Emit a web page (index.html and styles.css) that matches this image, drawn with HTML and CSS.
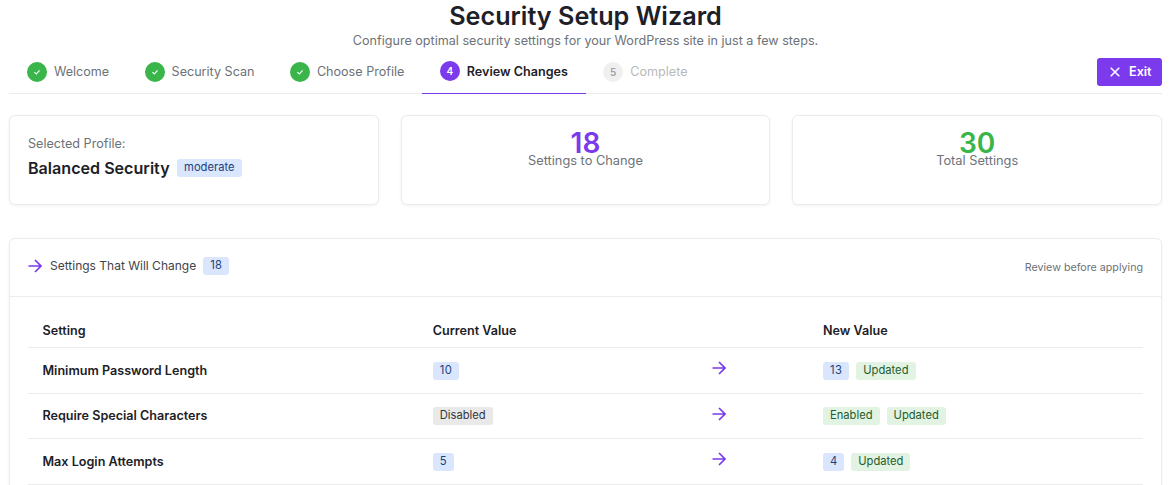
FILE: index.html
```html
<!DOCTYPE html>
<html lang="en">
<head>
<meta charset="utf-8">
<title>Security Setup Wizard</title>
<link rel="stylesheet" href="styles.css">
</head>
<body>
<main class="wizard">
  <header class="intro">
    <h1 class="title">Security Setup Wizard</h1>
    <p class="subtitle">Configure optimal security settings for your WordPress site in just a few steps.</p>
  </header>
  <nav class="stepper">
    <div class="steps">
      <div class="step done"><span class="dot"><svg class="check" viewBox="0 0 12 12"><path d="M3.400 6.200 5.300 8 8.600 4.400"/></svg></span><span>Welcome</span></div>
      <div class="step done"><span class="dot"><svg class="check" viewBox="0 0 12 12"><path d="M3.400 6.200 5.300 8 8.600 4.400"/></svg></span><span>Security Scan</span></div>
      <div class="step done"><span class="dot"><svg class="check" viewBox="0 0 12 12"><path d="M3.400 6.200 5.300 8 8.600 4.400"/></svg></span><span>Choose Profile</span></div>
      <div class="step active"><span class="dot">4</span><span>Review Changes</span></div>
      <div class="step pending"><span class="dot">5</span><span>Complete</span></div>
    </div>
    <button class="exit" type="button"><svg class="exit-icon" viewBox="0 0 14 14"><path d="M2 2 12 12M12 2 2 12"/></svg>Exit</button>
  </nav>
  <section class="summary">
    <div class="card profile">
      <div class="profile-label">Selected Profile:</div>
      <div class="profile-row"><span class="profile-name">Balanced Security</span><span class="badge blue">moderate</span></div>
    </div>
    <div class="card stat">
      <div class="stat-value purple">18</div>
      <div class="stat-label">Settings to Change</div>
    </div>
    <div class="card stat">
      <div class="stat-value green">30</div>
      <div class="stat-label">Total Settings</div>
    </div>
  </section>
  <section class="card changes">
    <div class="changes-head">
      <div class="changes-title">
        <svg class="arrow" viewBox="0 0 14 14"><path d="M.5 7H13M7 1 13 7 7 13"/></svg>
        <span>Settings That Will Change</span>
        <span class="badge blue num">18</span>
      </div>
      <div class="changes-note">Review before applying</div>
    </div>
    <div class="changes-body">
      <table class="table">
        <colgroup><col class="c1"><col class="c2"><col class="c3"><col class="c4"></colgroup>
        <thead><tr><th>Setting</th><th>Current Value</th><th></th><th>New Value</th></tr></thead>
        <tbody>
          <tr><td class="name">Minimum Password Length</td><td><span class="badge blue num">10</span></td><td><svg class="arrow" viewBox="0 0 14 14"><path d="M.5 7H13M7 1 13 7 7 13"/></svg></td><td><span class="badge blue num">13</span><span class="badge green">Updated</span></td></tr>
          <tr><td class="name">Require Special Characters</td><td><span class="badge grey">Disabled</span></td><td><svg class="arrow" viewBox="0 0 14 14"><path d="M.5 7H13M7 1 13 7 7 13"/></svg></td><td><span class="badge green">Enabled</span><span class="badge green">Updated</span></td></tr>
          <tr><td class="name">Max Login Attempts</td><td><span class="badge blue">5</span></td><td><svg class="arrow" viewBox="0 0 14 14"><path d="M.5 7H13M7 1 13 7 7 13"/></svg></td><td><span class="badge blue">4</span><span class="badge green">Updated</span></td></tr>
        </tbody>
      </table>
    </div>
  </section>
</main>
</body>
</html>
```
FILE: styles.css
```css
* { box-sizing: border-box; }
html, body { margin: 0; height: 100vh; overflow: hidden; background: #fff; }
body { font-family: Inter, "Liberation Sans", sans-serif; color: #1d2127; }
.wizard { padding: 0 12px 0 9px; }
.intro { text-align: center; }
.title { margin: 0; font-size: 25.2px; line-height: 32px; font-weight: 600; }
.subtitle { margin: 0; font-size: 12.6px; line-height: 18px; color: #6d7278; }
.stepper { display: flex; justify-content: space-between; align-items: center; height: 44px; border-bottom: 1px solid #ebebeb; }
.steps { display: flex; height: 44px; padding: 0 0 0 .2px; }
.step { display: flex; align-items: center; gap: 7px; padding: 0 17.7px; font-size: 12.6px; color: #6d7278; }
.dot { width: 20px; height: 20px; border-radius: 50%; display: flex; align-items: center; justify-content: center; font-size: 10px; font-weight: 600; color: #fff; }
.done .dot { background: #39b54a; }
.active { color: #1d2127; font-weight: 600; border-bottom: 1px solid #7c3aed; }
.active .dot { background: #7c3aed; }
.pending { color: #b9b9b9; }
.pending .dot { background: #f0f0f0; color: #a0a0a0; }
.check { width: 12px; height: 12px; fill: none; stroke: #fff; stroke-width: 1.1; }
.exit { display: flex; align-items: center; gap: 8px; width: 65px; height: 28px; padding: 0 0 1px 12px; border: 0; border-radius: 3px; background: #7c3aed; color: #fff; font: 600 12.6px Inter, sans-serif; margin-top: 1px; }
.exit-icon { width: 12px; height: 12px; fill: none; stroke: #fff; stroke-width: 1.8; }
.summary { display: grid; grid-template-columns: 1fr 1fr 1fr; gap: 22px; margin-top: 21px; }
.card { background: #fff; border: 1px solid #ececec; border-radius: 6px; box-shadow: 0 1px 3px rgba(0,0,0,.06); }
.summary .card { height: 90px; }
.profile { padding: 19px 18px; }
.profile-label { font-size: 12.6px; line-height: 17px; color: #6d7278; }
.profile-row { display: flex; align-items: center; gap: 7.5px; margin-top: 6px; }
.profile-name { font-size: 16.1px; line-height: 20px; font-weight: 600; }
.stat { text-align: center; padding-top: 14px; }
.stat-value { font-size: 28px; line-height: 26px; font-weight: 600; }
.purple { color: #7c3aed; }
.stat-value.green { color: #39b54a; }
.stat-label { font-size: 12.8px; line-height: 10px; color: #6d7278; }
.badge { display: inline-block; height: 18px; padding: 0 7px; border-radius: 3px; font-size: 11.2px; line-height: 16px; font-weight: 400; }
.badge.num { letter-spacing: .4px; }
.badge.blue { background: #d9e6fd; color: #1d3f7c; }
.badge.grey { background: #e9e9e9; color: #33373d; }
.badge.green { background: #e2f3e3; color: #1f5d2d; }
.changes { margin-top: 33px; height: 300px; }
.changes-head { display: flex; justify-content: space-between; align-items: center; height: 58px; padding: 0 18px; border-bottom: 1px solid #ececec; }
.changes-title { display: flex; align-items: center; gap: 8px; padding-bottom: 4px; font-size: 12px; color: #3f444a; }
.changes-title .badge { margin-left: -1px; }
.changes-note { font-size: 10.7px; color: #6d7278; }
.arrow { width: 14px; height: 14px; fill: none; stroke: #7c3aed; stroke-width: 1.7; }
.changes-body { padding: 16px 18px 0; }
.table { width: 100%; border-collapse: collapse; table-layout: fixed; font-size: 12.6px; }
.c1 { width: 35%; } .c2 { width: 25%; } .c3 { width: 10%; } .c4 { width: 30%; }
th { height: 34.5px; padding: 1px 14.5px 0; text-align: left; font-weight: 600; border-bottom: 1px solid #ebebeb; }
td { height: 45.5px; padding: 1px 14.5px 0; border-bottom: 1px solid #ebebeb; }
td.name { padding-top: 0; }
td .arrow { display: block; margin-top: -5px; }
td .badge + .badge { margin-left: 7px; }
.name { font-weight: 600; }
```
